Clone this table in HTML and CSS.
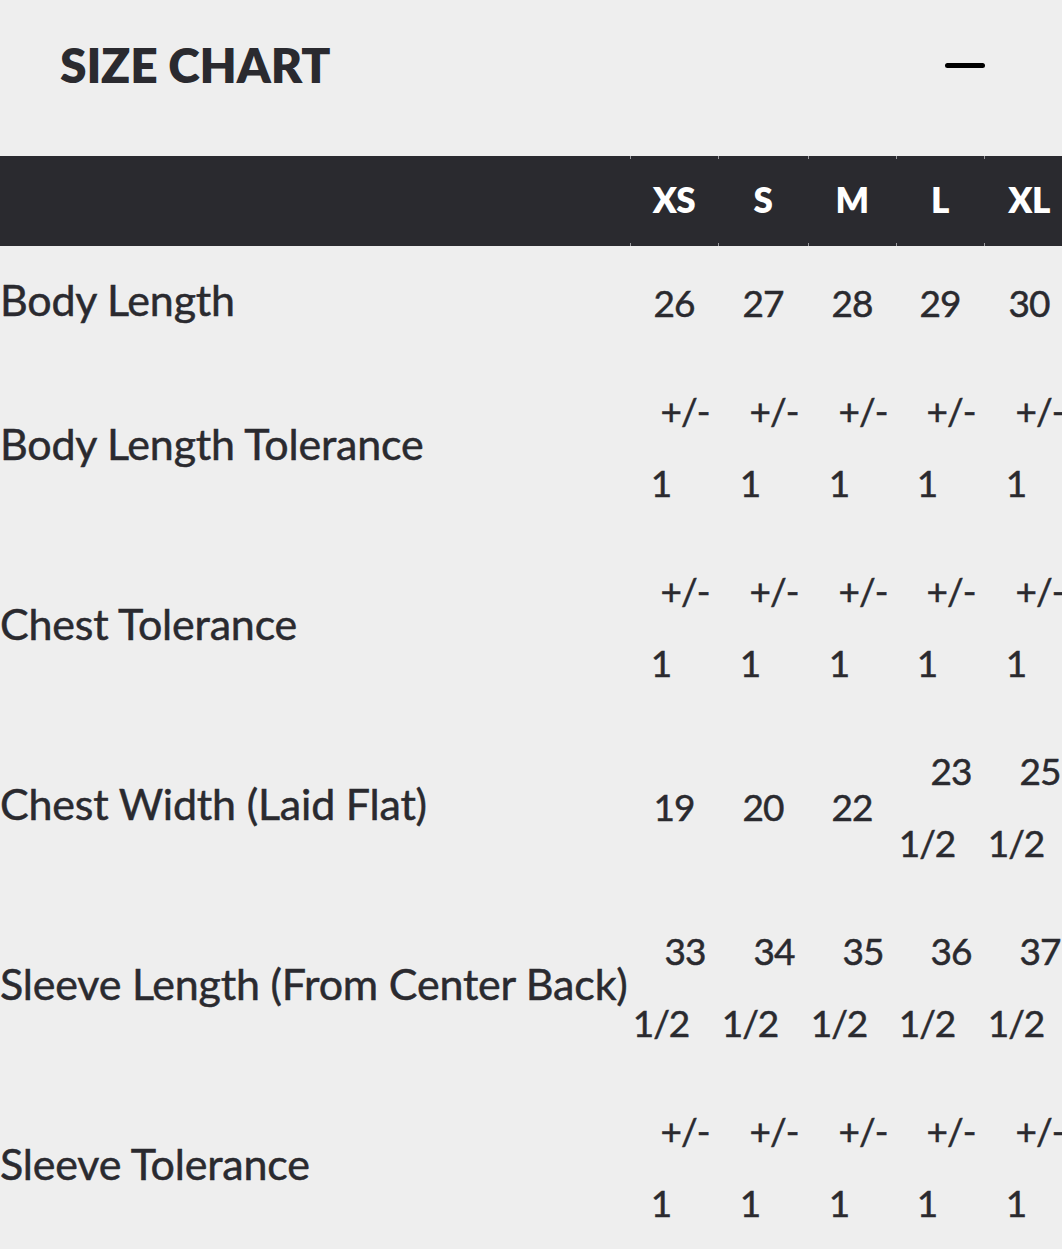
FILE: index.html
```html
<!DOCTYPE html>
<html lang="en">
<head>
<meta charset="utf-8">
<title>Size Chart</title>
<link rel="stylesheet" href="styles.css">
</head>
<body>
<div class="page">
  <div class="head">
    <h2 class="title">SIZE CHART</h2>
    <span class="toggle" aria-label="Collapse"></span>
  </div>
  <div class="table-wrap">
    <table class="chart">
      <colgroup>
        <col class="c-label">
        <col class="c-xs">
        <col class="c-s">
        <col class="c-m">
        <col class="c-l">
        <col class="c-xl">
      </colgroup>
      <thead>
        <tr>
          <th class="blank"></th>
          <th class="size">XS</th>
          <th class="size">S</th>
          <th class="size">M</th>
          <th class="size">L</th>
          <th class="size">XL</th>
        </tr>
      </thead>
      <tbody>
        <tr>
          <td class="label">Body Length</td>
          <td>26</td><td>27</td><td>28</td><td>29</td><td>30</td>
        </tr>
        <tr>
          <td class="label">Body Length Tolerance</td>
          <td><span class="l1">+/-</span><span class="l2">1</span></td>
          <td><span class="l1">+/-</span><span class="l2">1</span></td>
          <td><span class="l1">+/-</span><span class="l2">1</span></td>
          <td><span class="l1">+/-</span><span class="l2">1</span></td>
          <td><span class="l1">+/-</span><span class="l2">1</span></td>
        </tr>
        <tr>
          <td class="label">Chest Tolerance</td>
          <td><span class="l1">+/-</span><span class="l2">1</span></td>
          <td><span class="l1">+/-</span><span class="l2">1</span></td>
          <td><span class="l1">+/-</span><span class="l2">1</span></td>
          <td><span class="l1">+/-</span><span class="l2">1</span></td>
          <td><span class="l1">+/-</span><span class="l2">1</span></td>
        </tr>
        <tr>
          <td class="label">Chest Width (Laid Flat)</td>
          <td>19</td><td>20</td><td>22</td>
          <td><span class="l1">23</span><span class="l2">1/2</span></td>
          <td><span class="l1">25</span><span class="l2">1/2</span></td>
        </tr>
        <tr>
          <td class="label">Sleeve Length (From Center Back)</td>
          <td><span class="l1">33</span><span class="l2">1/2</span></td>
          <td><span class="l1">34</span><span class="l2">1/2</span></td>
          <td><span class="l1">35</span><span class="l2">1/2</span></td>
          <td><span class="l1">36</span><span class="l2">1/2</span></td>
          <td><span class="l1">37</span><span class="l2">1/2</span></td>
        </tr>
        <tr>
          <td class="label">Sleeve Tolerance</td>
          <td><span class="l1">+/-</span><span class="l2">1</span></td>
          <td><span class="l1">+/-</span><span class="l2">1</span></td>
          <td><span class="l1">+/-</span><span class="l2">1</span></td>
          <td><span class="l1">+/-</span><span class="l2">1</span></td>
          <td><span class="l1">+/-</span><span class="l2">1</span></td>
        </tr>
      </tbody>
    </table>
  </div>
</div>
</body>
</html>
```

FILE: styles.css
```css
html, body {
  margin: 0;
  padding: 0;
  background: #eeeeee;
}

body {
  font-family: "Lato", "Noto Sans", sans-serif;
  color: #2a2a2f;
  overflow: hidden;
}

.page {
  width: 1062px;
  overflow: hidden;
}

.head {
  height: 130px;
  display: flex;
  align-items: center;
  justify-content: space-between;
  padding: 0 77px 0 60px;
  margin-bottom: 26px;
}

.title {
  margin: 0;
  font-size: 48px;
  font-weight: 800;
  letter-spacing: -0.2px;
  line-height: 1;
  color: #2a2a2f;
}

.toggle {
  display: block;
  width: 40px;
  height: 5px;
  border-radius: 3px;
  background: #000;
}

.table-wrap {
  width: 1062px;
  overflow: hidden;
}

.chart {
  border-collapse: collapse;
  table-layout: fixed;
  width: 1074px;
}

.c-label { width: 630px; }
.c-xs { width: 88px; }
.c-s { width: 90px; }
.c-m { width: 88px; }
.c-l { width: 88px; }
.c-xl { width: 90px; }

.chart th {
  height: 90px;
  padding: 0;
  background: #2a2a2f;
}

.chart th.size {
  color: #ffffff;
  font-size: 35px;
  font-weight: 800;
  text-align: center;
  letter-spacing: -0.5px;
  line-height: 86px;
  vertical-align: top;
  background:
    linear-gradient(#9a9a9e, #9a9a9e) left top / 1px 3px no-repeat,
    linear-gradient(#9a9a9e, #9a9a9e) left bottom / 1px 3px no-repeat,
    #2a2a2f;
}

.chart td {
  padding: 21px 0 15px;
  line-height: 72px;
  font-size: 37px;
  text-align: center;
  vertical-align: middle;
  letter-spacing: -1px;
  -webkit-text-stroke: 0.5px #2a2a2f;
}

.chart td.label {
  padding: 18px 0;
  text-align: left;
  font-size: 43px;
  letter-spacing: -0.2px;
  white-space: nowrap;
}

.l1 {
  display: block;
  padding-left: 22px;
}

.l2 {
  display: block;
  padding-right: 26px;
}
```
